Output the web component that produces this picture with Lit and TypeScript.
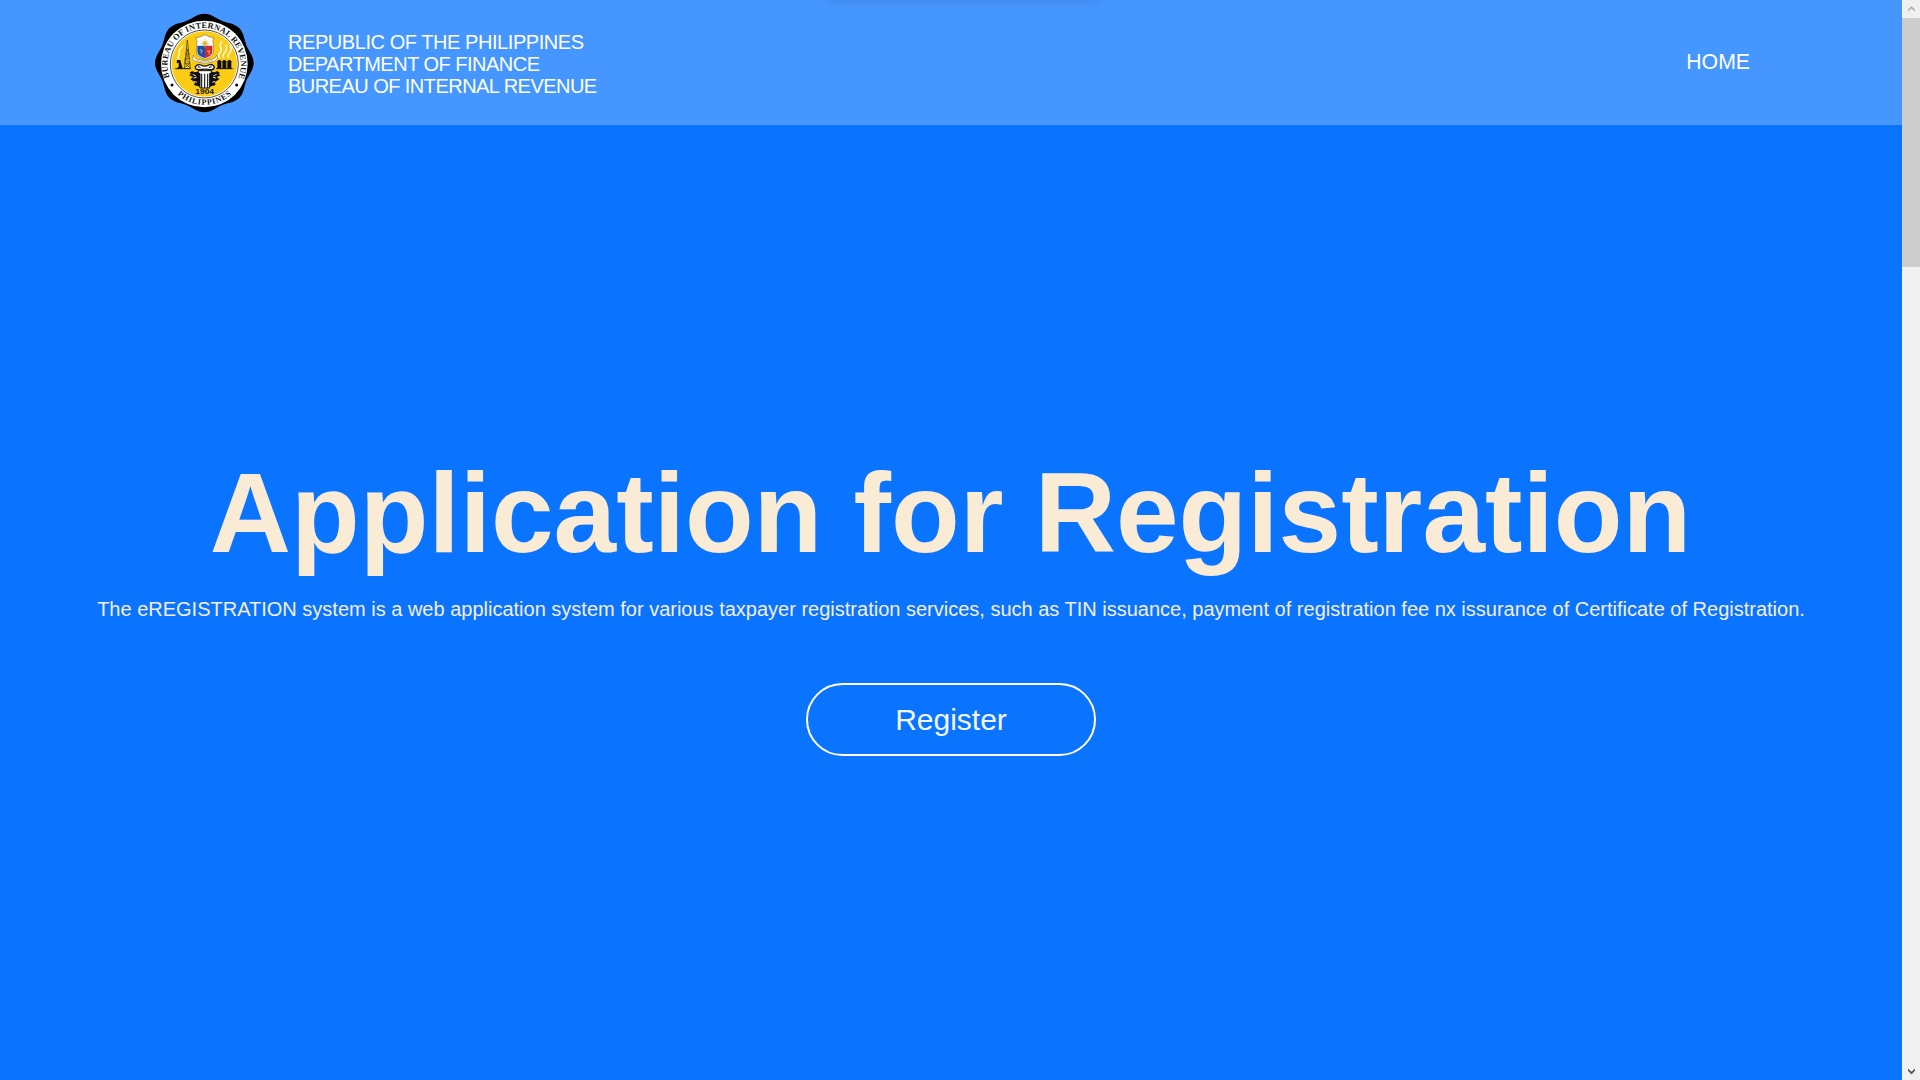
import { LitElement, html, css, svg } from "lit";
import { customElement } from "lit/decorators.js";

// Eight-lobed medal rim behind the seal.
const rim = Array.from({ length: 120 }, (_, i) => {
  const a = (i * Math.PI) / 60;
  const r = 142.5 + 5.5 * Math.cos(8 * a);
  return `${(181 + r * Math.sin(a)).toFixed(1)},${(177 - r * Math.cos(a)).toFixed(1)}`;
}).join(" ");

@customElement("bir-seal")
class BirSeal extends LitElement {
  static styles = css`
    :host { display: block; width: 120px; height: 120px; flex: none; }
    svg { display: block; width: 120px; height: 120px; }
    .ring { font-family: "Liberation Serif", serif; font-weight: 700; fill: #111; }
    .year { font-family: "Liberation Sans", sans-serif; font-weight: 700; fill: #111; }
  `;

  render() {
    return html`<svg viewBox="0 0 360 360" role="img" aria-label="Seal">
      <defs>
        <path id="top" d="M77 220A110 110 0 1 1 285 216" />
        <path id="bottom" d="M94 266A122 122 0 0 0 270 264" />
      </defs>
      <polygon fill="#000" points=${rim} />
      <circle cx="181" cy="180" r="130" fill="#fff" />
      <circle cx="181" cy="180" r="102" fill="#fff" stroke="#222" stroke-width="2.4" />
      <circle cx="181" cy="180" r="98" fill="#fbcb16" />
      <text class="ring" font-size="25"><textPath href="#top" textLength="425" lengthAdjust="spacing">BUREAU OF INTERNAL REVENUE</textPath></text>
      <text class="ring" font-size="24"><textPath href="#bottom" startOffset="8" textLength="178" lengthAdjust="spacing">PHILIPPINES</textPath></text>
      <circle cx="84" cy="243" r="4.5" /><circle cx="278" cy="243" r="4.5" />
      <path d="M99 168h10l3 12l5 14H98l6-6V176l-6 2Z" fill="#111" />
      <path d="M130 108L121 193M130 108L139 193M127 136h6M126 150h9M124 164h12M123 178h15M127 136l8 14M134 136l-9 14l12 14M136 150l-13 14l15 14M124 164l-1 14M121 192l17-14M139 192l-16-14" stroke="#222" stroke-width="1.8" fill="none" />
      <path d="M103 166c-5-9 8-14 3-23c-3-7 7-9 10-19" fill="none" stroke="#fff" stroke-width="4" />
      <path d="M94 194h46M216 194h50" stroke="#111" stroke-width="3" />
      ${[226, 241, 256].map((x) => svg`<path d="M${x - 6} 194v-22q6-8 12 0v22Z" fill="#111"/>`)}
      <path d="M225 162q-4-10 3-17t2-15t5-18M239 162q-4-10 4-18t2-22M254 162q-4-10 4-18t0-20" fill="none" stroke="#fff" stroke-width="4" />
      <path d="M156 101q14-1 27-9q13 8 26 9q-4 10-1 24v20q0 15-25 20q-25-5-25-20v-20q3-14-2-24Z" fill="#fff" stroke="#8d7423" stroke-width="2" />
      <path d="M160 125h23v37q-23-4-23-20Z" fill="#174fb4" />
      <path d="M183 125h22v17q0 16-22 20Z" fill="#d4242d" />
      <path d="M183 105v26M170 118h26M174 109l18 18M192 109l-18 18" fill="none" stroke="#e1ae3c" stroke-width="2" />
      <circle cx="183" cy="118" r="6.5" fill="#e9b52d" />
      <path d="M168 139q4-4 6 1l-3 8M189 141l9 0l-4 7l4 4" fill="none" stroke="#eac04e" stroke-width="3" />
      <path d="M148 153q3 14 17 14q18 6 36 0q14-1 17-14l2 10q-5 11-19 12q-18 6-36 0q-15-1-20-12Z" fill="#fff" stroke="#6d653f" stroke-width="1.5" />
      <path d="M157 170q24 7 51 0" fill="none" stroke="#555" stroke-width="2" stroke-dasharray="3 2" />
      <path d="M136 207l8-6l8 4l16-3v46l-18-5l3-8l-14-9l8-7l-12-5l7-4Z" fill="#111" />
      <path d="M228 207l-8-6l-8 4l-15-3v46l18-5l-3-8l14-9l-8-7l12-5l-7-4Z" fill="#111" />
      <path d="M163 200h39v8h-5v44h-29v-44h-5Z" fill="#fff" stroke="#111" stroke-width="3" />
      <path d="M173 209v43M182 209v43M191 209v43" stroke="#111" stroke-width="3.2" />
      <path d="M154 188q7-9 17-5q11 7 23 0q12-5 17 6q-2 10-12 8q-17-3-34 0q-12 1-11-9Z" fill="#fff" stroke="#111" stroke-width="4" />
      <path d="M161 189q7-3 8 3M203 189q-7-3-8 3" fill="none" stroke="#111" stroke-width="3" />
      <path d="M146 211l10 5M148 222l10-2M151 232l8 3M218 211l-10 5M216 222l-9-2M213 232l-8 3" stroke="#fff" stroke-width="2.6" />
      <text class="year" x="154" y="271" font-size="23" textLength="56" lengthAdjust="spacingAndGlyphs">1904</text>
    </svg>`;
  }
}

@customElement("scroll-bar")
class ScrollBar extends LitElement {
  static styles = css`
    :host { display: flex; flex-direction: column; width: 18px; height: 1080px; background: #f0f0f0; }
    svg { display: block; width: 18px; height: 18px; flex: none; }
    .thumb { height: 249px; background: #cdcdcd; }
    .track { flex: 1; }
  `;
  render() {
    return html`
      <svg viewBox="0 0 18 18"><path d="M6 11.5V9.5L9.5 6L13 9.5V11.5L9.5 8.5Z" fill="#b0b0b0" /></svg>
      <div class="thumb"></div>
      <div class="track"></div>
      <svg viewBox="0 0 18 18"><path d="M6 6.5V8.8L9.5 12.5L13 8.8V6.5L9.5 9.8Z" fill="#555" /></svg>
    `;
  }
}

@customElement("app-root")
class AppRoot extends LitElement {
  static styles = css`
    :host {
      display: flex; width: 1920px; height: 1080px; overflow: hidden;
      font-family: "Liberation Sans", Arial, sans-serif; background: #0a74ff; color: #fff;
    }
    .page { display: flex; flex-direction: column; width: 1902px; height: 1080px; }
    header {
      display: flex; box-sizing: border-box; height: 125px; flex: none; overflow: hidden;
      background: #4696ff; padding: 4px 152px 0 144px; position: relative;
    }
    .glow {
      position: absolute; left: 828px; top: -10px; width: 270px; height: 8px;
      box-shadow: 0 2px 10px rgba(0, 20, 60, 0.16);
    }
    .agency { margin: 27px 0 0 24px; font-size: 20px; line-height: 22px; white-space: nowrap; }
    .l1 { letter-spacing: -0.44px; }
    .l2 { letter-spacing: -0.51px; }
    .l3 { letter-spacing: -0.54px; }
    nav { margin-left: auto; padding-top: 46px; font-size: 21.25px; line-height: 24px; }
    main { display: flex; flex-direction: column; align-items: center; }
    h1 {
      margin: 325px 1px 0 0; font-size: 112.5px; line-height: 126px; font-weight: 700;
      color: #faebd7; white-space: nowrap;
    }
    p { margin: 21px 0 0; font-size: 20px; line-height: 24px; color: #f4eee8; white-space: nowrap; }
    .btn {
      box-sizing: border-box; width: 290px; height: 73px; margin-top: 62px; border: 2px solid #fff;
      border-radius: 37px; background: none; color: #f0f6ff; font: 30px "Liberation Sans", Arial, sans-serif; padding: 0;
    }
  `;

  render() {
    return html`
      <div class="page">
        <header>
          <div class="glow"></div>
          <bir-seal></bir-seal>
          <div class="agency">
            <div class="l1">REPUBLIC OF THE PHILIPPINES</div>
            <div class="l2">DEPARTMENT OF FINANCE</div>
            <div class="l3">BUREAU OF INTERNAL REVENUE</div>
          </div>
          <nav>HOME</nav>
        </header>
        <main>
          <h1>Application for Registration</h1>
          <p>The eREGISTRATION system is a web application system for various taxpayer registration services, such as TIN issuance, payment of registration fee nx issurance of Certificate of Registration.</p>
          <button class="btn">Register</button>
        </main>
      </div>
      <scroll-bar></scroll-bar>
    `;
  }
}
